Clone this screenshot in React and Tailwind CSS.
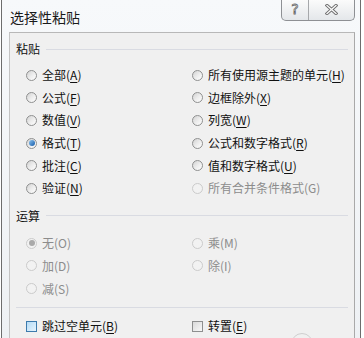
import React from "react";

function Radio({ checked, disabled }) {
  return (
    <span
      className={`flex h-[11px] w-[11px] shrink-0 items-center justify-center rounded-full border ${
        disabled
          ? "border-[#cbcbcb] bg-[#f2f2f2]"
          : "border-[#8f9090] bg-gradient-to-br from-[#d2d2d2] via-[#ececec] to-[#ffffff]"
      }`}
    >
      {checked && (
        <span
          className={`h-[6px] w-[6px] rounded-full ${
            disabled
              ? "bg-[#a9a9a9]"
              : "bg-gradient-to-br from-[#8ac4f0] to-[#0f5aa8]"
          }`}
        />
      )}
    </span>
  );
}

function Label({ text, hot, disabled }) {
  return (
    <span className={disabled ? "text-[#8c8c8c]" : "text-[#111]"}>
      {text}(
      {disabled ? hot : <span className="underline underline-offset-[2px]">{hot}</span>})
    </span>
  );
}

function Option({ text, hot, checked, disabled }) {
  return (
    <div className="flex h-[22.6px] items-center gap-[5px]">
      <Radio checked={checked} disabled={disabled} />
      <Label text={text} hot={hot} disabled={disabled} />
    </div>
  );
}

function Check({ text, hot, focused }) {
  return (
    <div className="flex items-center gap-[5px]">
      <span
        className={`flex h-[11px] w-[11px] shrink-0 items-center justify-center border ${
          focused ? "border-[#3d7bad]" : "border-[#8e8f8f]"
        }`}
      >
        <span
          className={`h-[9px] w-[9px] ${
            focused
              ? "bg-gradient-to-br from-[#b6dcf6] to-[#e6f4fd]"
              : "bg-gradient-to-br from-[#dadada] to-[#f8f8f8]"
          }`}
        />
      </span>
      <Label text={text} hot={hot} />
    </div>
  );
}

function Section({ title }) {
  return (
    <div className="flex h-[16px] items-center gap-[6px] pr-[6px]">
      <span className="text-[#111]">{title}</span>
      <span className="h-px flex-1 bg-[#d9dbe2]" />
    </div>
  );
}

export default function App() {
  const paste = [
    [{ text: "全部", hot: "A" }, { text: "所有使用源主题的单元", hot: "H" }],
    [{ text: "公式", hot: "F" }, { text: "边框除外", hot: "X" }],
    [{ text: "数值", hot: "V" }, { text: "列宽", hot: "W" }],
    [{ text: "格式", hot: "T", checked: true }, { text: "公式和数字格式", hot: "R" }],
    [{ text: "批注", hot: "C" }, { text: "值和数字格式", hot: "U" }],
    [{ text: "验证", hot: "N" }, { text: "所有合并条件格式", hot: "G", disabled: true }],
  ];
  const ops = [
    [{ text: "无", hot: "O", checked: true, disabled: true }, { text: "乘", hot: "M", disabled: true }],
    [{ text: "加", hot: "D", disabled: true }, { text: "除", hot: "I", disabled: true }],
    [{ text: "减", hot: "S", disabled: true }, null],
  ];

  return (
    <div className="relative h-[338px] w-[364px] overflow-hidden bg-white font-['Microsoft_YaHei','Noto_Sans_CJK_SC',sans-serif] text-[12px] leading-[16px]">
      <div className="ml-[1px] flex h-full w-[360px] flex-col border-x border-[#6d6d6d] bg-gradient-to-b from-[#f7f9fb] to-[#eef1f4]">
        {/* title bar */}
        <div className="flex h-[32px] shrink-0 items-start pl-[8px] pr-[5px]">
          <span className="mt-[8px] text-[14px] leading-[18px] text-[#1a1a1a]">选择性粘贴</span>
          <div className="ml-auto flex h-[21px] overflow-hidden rounded-b-[5px] border border-t-0 border-[#8e9094] bg-gradient-to-b from-[#fbfbfb] to-[#e4e7ea]">
            <div className="flex w-[27px] items-center justify-center border-r border-[#a6a8ab] pb-[2px] font-['DejaVu_Sans',sans-serif] text-[14px] text-[#fafafa] [-webkit-text-stroke:0.8px_#6a6a6a]">
              ?
            </div>
            <div className="flex w-[45px] items-center justify-center pb-[1px]">
              <svg width="13" height="11" viewBox="0 0 13 11">
                <path d="M2 1.5 L11 9.5 M11 1.5 L2 9.5" stroke="#6e6e6e" strokeWidth="3.2" strokeLinecap="square" />
                <path d="M2 1.5 L11 9.5 M11 1.5 L2 9.5" stroke="#fafafa" strokeWidth="1.3" strokeLinecap="square" />
              </svg>
            </div>
          </div>
        </div>

        {/* client panel */}
        <div className="ml-[7px] flex w-[346px] flex-1 flex-col border-l border-r border-t border-l-[#c3c3c3] border-r-[#a9a9a9] border-t-[#b8b8b8] bg-[#f0f0f0] pl-[6px] pt-[8px]">
          <Section title="粘贴" />
          <div className="ml-[10px] mt-[7px] grid grid-cols-[166px_1fr]">
            {paste.flat().map((o, i) => (
              <Option key={i} {...o} />
            ))}
          </div>

          <div className="mt-[8px]">
            <Section title="运算" />
          </div>
          <div className="ml-[10px] mt-[8.5px] grid grid-cols-[166px_1fr]">
            {ops.flat().map((o, i) =>
              o ? <Option key={i} {...o} /> : <div key={i} />
            )}
          </div>

          <div className="mr-[6px] mt-[7.5px] h-px bg-[#d9dbe2]" />

          <div className="ml-[10px] mt-[10px] grid grid-cols-[166px_1fr]">
            <Check text="跳过空单元" hot="B" focused />
            <Check text="转置" hot="E" />
          </div>
        </div>
      </div>
      <div className="absolute left-[291px] top-[333px] h-[22px] w-[22px] rounded-full border border-[#cfcfcf]" />
    </div>
  );
}
